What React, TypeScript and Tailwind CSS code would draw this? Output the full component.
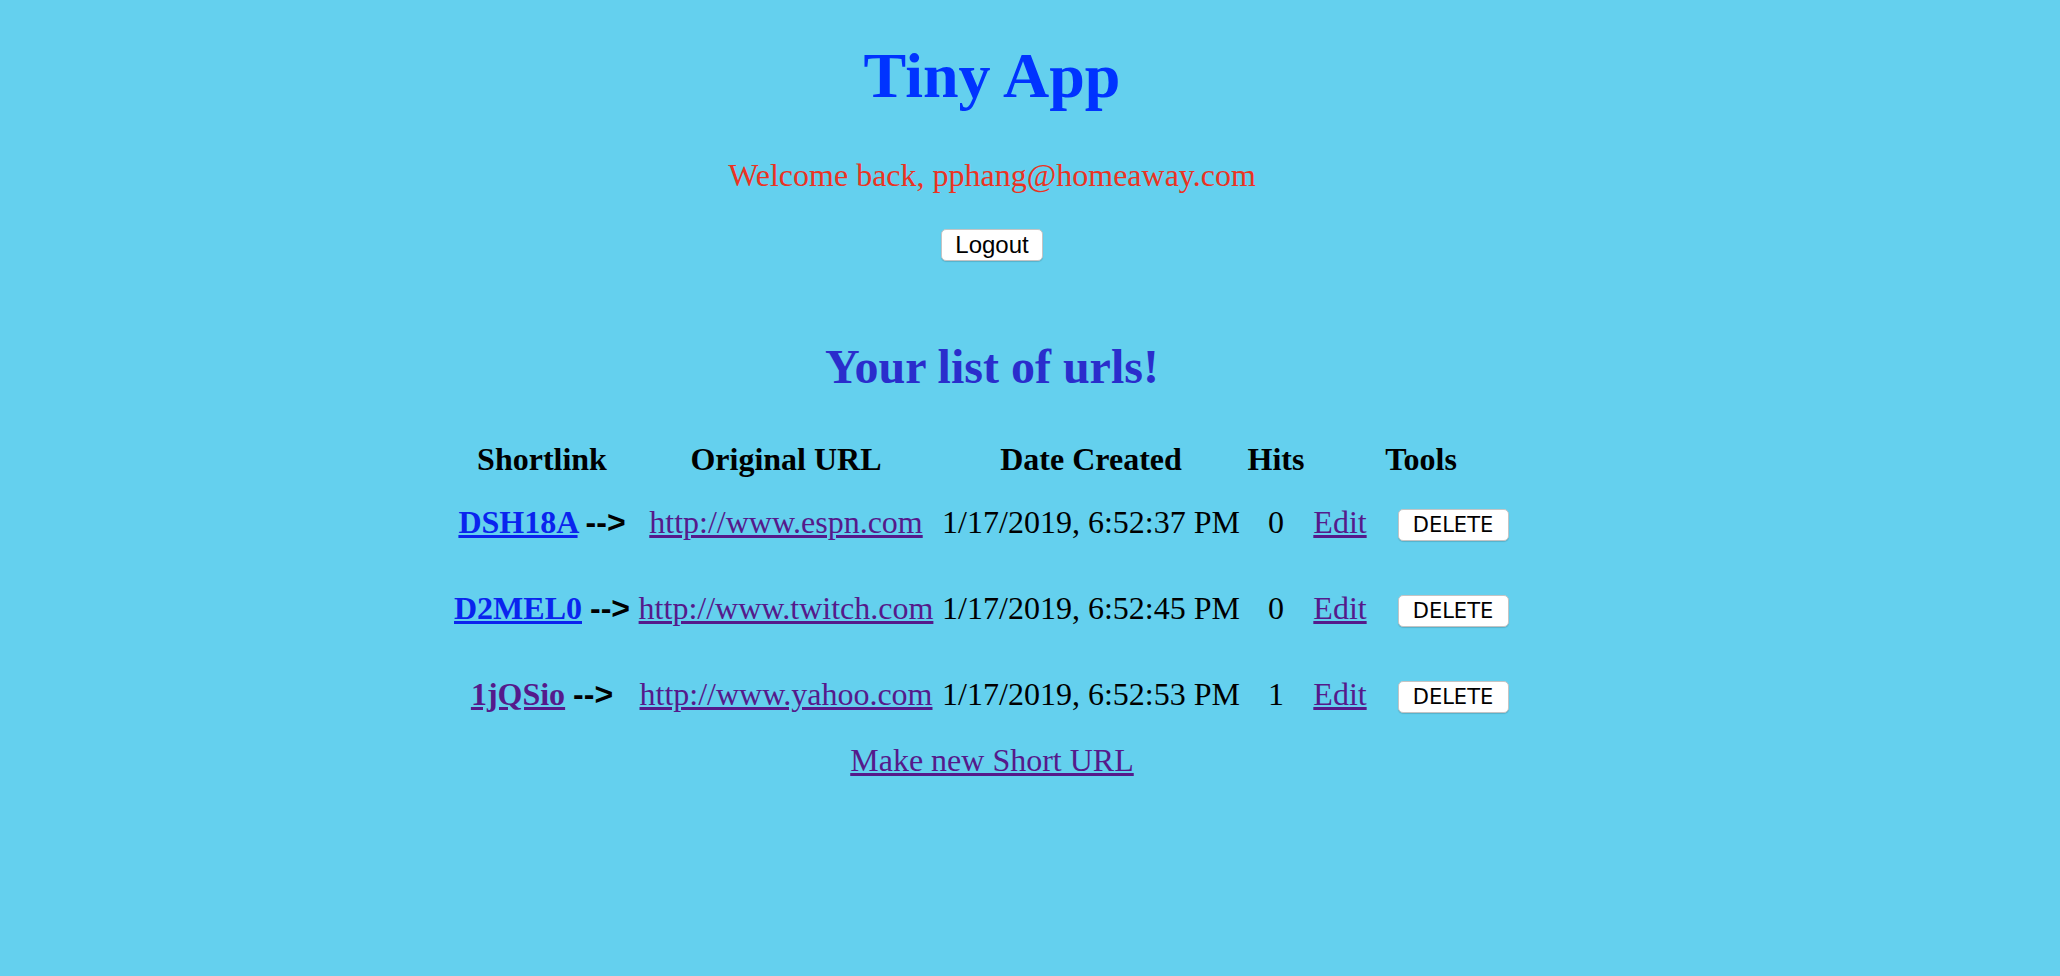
import React from "react";

const serif = { fontFamily: '"Liberation Serif", "Times New Roman", serif' };

const rows = [
  { code: "DSH18A", codeVisited: false, url: "http://www.espn.com", date: "1/17/2019, 6:52:37 PM", hits: "0" },
  { code: "D2MEL0", codeVisited: false, url: "http://www.twitch.com", date: "1/17/2019, 6:52:45 PM", hits: "0" },
  { code: "1jQSio", codeVisited: true, url: "http://www.yahoo.com", date: "1/17/2019, 6:52:53 PM", hits: "1" },
];

const gridCols = "grid grid-cols-[178px_310px_300px_70px_58px_162px] justify-center";

export default function App() {
  return (
    <div
      className="min-h-[976px] w-full bg-[#64d0ee] pr-[76px] text-black"
      style={serif}
    >
      <div className="flex flex-col items-center pt-[40px]">
        <h1 className="text-[64px] font-bold leading-[72px] text-[#0033ff] m-0">Tiny App</h1>
        <p className="mt-[43px] text-[32px] leading-[40px] text-[#eb3323]">
          Welcome back, pphang@homeaway.com
        </p>
        <button
          className="mt-[34px] h-[32px] w-[102px] rounded-[5px] border border-[#c4c4c4] bg-white text-[24px] leading-[30px] text-black shadow-[0_1px_1px_rgba(0,0,0,0.15)]"
          style={{ fontFamily: '"Liberation Sans", Arial, sans-serif' }}
        >
          Logout
        </button>
        <h2 className="mt-[78px] text-[48px] font-bold leading-[56px] text-[#2a2dcc]">
          Your list of urls!
        </h2>

        <div className="mt-[44px] flex w-full flex-col">
          <div className={`${gridCols} text-[32px] font-bold leading-[40px] text-center`}>
            <div>Shortlink</div>
            <div>Original URL</div>
            <div>Date Created</div>
            <div>Hits</div>
            <div className="col-span-2">Tools</div>
          </div>

          <div className="mt-[23px] flex flex-col gap-[46px]">
            {rows.map((r) => (
              <div
                key={r.code}
                className={`${gridCols} items-start text-[32px] leading-[40px] text-center`}
              >
                <div className="whitespace-nowrap font-bold">
                  <a
                    href="#"
                    className={`underline ${r.codeVisited ? "text-[#551a8b]" : "text-[#0a24ee]"}`}
                  >
                    {r.code}
                  </a>{" "}
                  <span style={{ fontFamily: '"Liberation Sans", Arial, sans-serif' }}>--&gt;</span>
                </div>
                <div className="whitespace-nowrap">
                  <a href="#" className="text-[#551a8b] underline">
                    {r.url}
                  </a>
                </div>
                <div className="whitespace-nowrap">{r.date}</div>
                <div>{r.hits}</div>
                <div>
                  <a href="#" className="text-[#551a8b] underline">
                    Edit
                  </a>
                </div>
                <div className="flex justify-center pl-[6px] pt-[7px]">
                  <button
                    className="h-[32px] w-[111px] rounded-[5px] border border-[#c4c4c4] bg-white text-[21px] leading-[30px] text-black shadow-[0_1px_1px_rgba(0,0,0,0.15)]"
                    style={{ fontFamily: '"DejaVu Sans", Verdana, sans-serif' }}
                  >
                    DELETE
                  </button>
                </div>
              </div>
            ))}
          </div>
        </div>

        <a href="#" className="mt-[26px] text-[32px] leading-[40px] text-[#551a8b] underline">
          Make new Short URL
        </a>
      </div>
    </div>
  );
}
